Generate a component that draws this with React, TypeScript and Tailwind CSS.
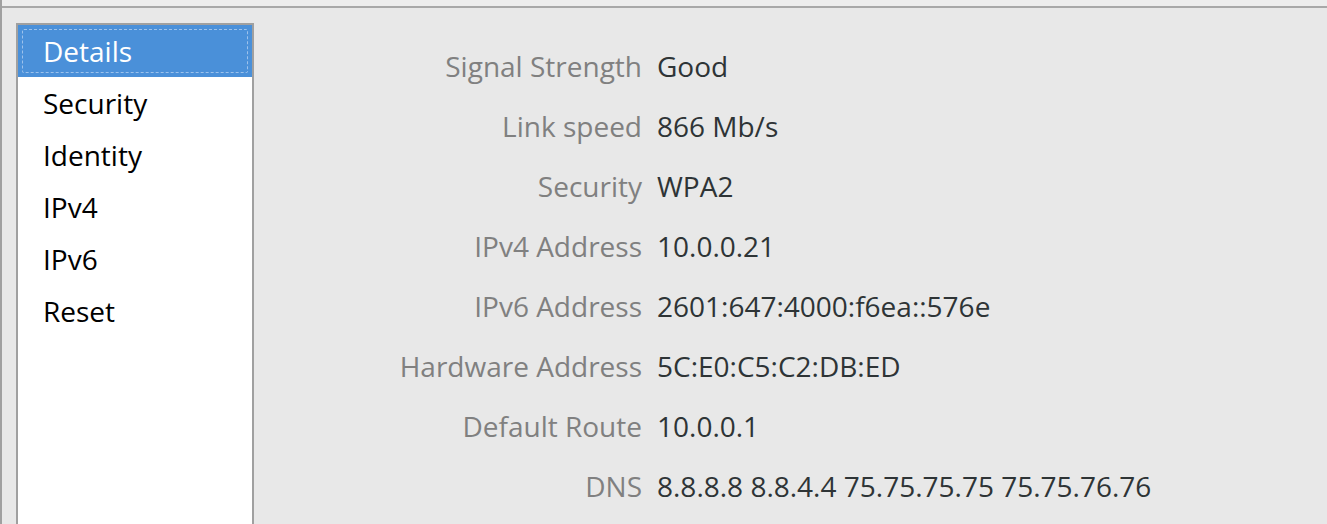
import React from 'react';

const tabs = ['Details', 'Security', 'Identity', 'IPv4', 'IPv6', 'Reset'];

const details: [string, string][] = [
  ['Signal Strength', 'Good'],
  ['Link speed', '866 Mb/s'],
  ['Security', 'WPA2'],
  ['IPv4 Address', '10.0.0.21'],
  ['IPv6 Address', '2601:647:4000:f6ea::576e'],
  ['Hardware Address', '5C:E0:C5:C2:DB:ED'],
  ['Default Route', '10.0.0.1'],
  ['DNS', '8.8.8.8 8.8.4.4 75.75.75.75 75.75.76.76'],
];

const App = () => {
  return (
    <div
      className="flex h-[524px] w-full overflow-hidden bg-[#e8e8e8]"
      style={{ fontFamily: '"Open Sans", "Noto Sans", sans-serif' }}
    >
      <div className="w-[2px] shrink-0 bg-[#a0a0a0]" />
      <div className="flex flex-1 flex-col">
        <div className="h-[6px] bg-[#ededed] border-b-2 border-[#a8a8a8] box-content" />
        <div className="flex flex-1 pl-[14px] pt-[15px]">
          {/* Sidebar list */}
          <div className="w-[238px] shrink-0 border-2 border-b-0 border-[#a0a0a0] bg-white">
            {tabs.map((tab, i) => (
              <div
                key={tab}
                className={
                  i === 0
                    ? 'relative flex h-[52px] items-center bg-[#4a90d9] pl-[25px] text-[28px] text-white'
                    : 'flex h-[52px] items-center pl-[25px] text-[28px] text-black'
                }
              >
                {i === 0 && (
                  <span className="absolute inset-[4px] rounded-[2px] border border-dashed border-[#9dc2ec]" />
                )}
                <span className="leading-none">{tab}</span>
              </div>
            ))}
          </div>

          {/* Details grid */}
          <div className="flex-1 pt-[13px]">
            {details.map(([label, value]) => (
              <div key={label} className="flex h-[60px] items-center text-[28px] leading-none">
                <span className="w-[388px] shrink-0 text-right text-[#808080]">{label}</span>
                <span className="pl-[15px] text-[#2e3436] whitespace-nowrap">{value}</span>
              </div>
            ))}
          </div>
        </div>
      </div>
    </div>
  );
};

export default App;
